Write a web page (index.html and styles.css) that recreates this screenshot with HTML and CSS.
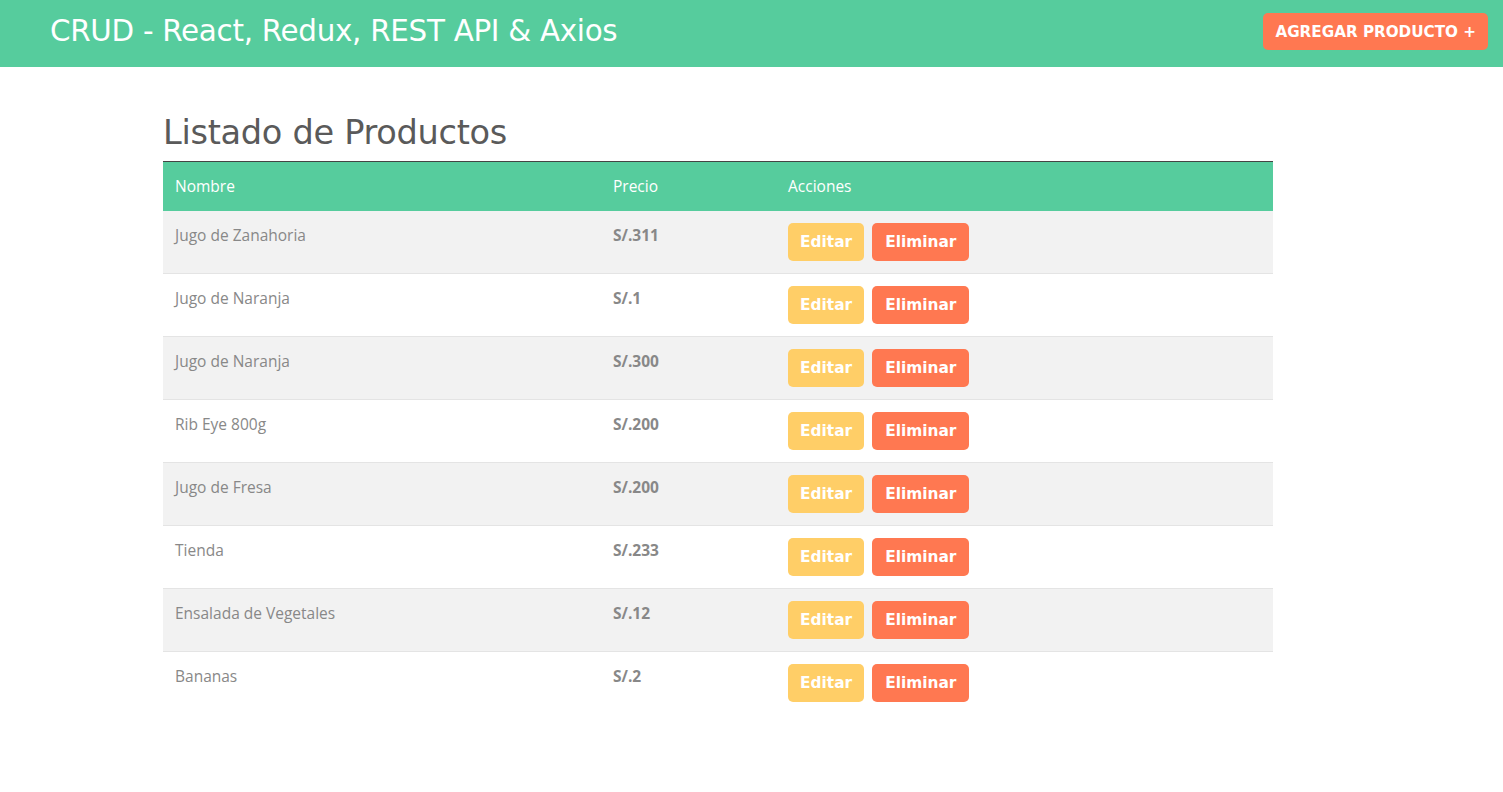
FILE: index.html
```html
<!DOCTYPE html>
<html lang="es">
<head>
<meta charset="utf-8">
<title>CRUD - React, Redux, REST API &amp; Axios</title>
<link rel="stylesheet" href="styles.css">
</head>
<body>
<nav class="navbar">
  <h1 class="brand">CRUD - React, Redux, REST API &amp; Axios</h1>
  <a class="btn btn-danger btn-add" href="#">Agregar Producto +</a>
</nav>
<main class="container">
  <h2 class="title">Listado de Productos</h2>
  <table class="table">
    <thead>
      <tr><th class="c-name">Nombre</th><th class="c-price">Precio</th><th class="c-act">Acciones</th></tr>
    </thead>
    <tbody>
      <tr><td>Jugo de Zanahoria</td><td class="price">S/.311</td><td><div class="acts"><a class="btn btn-warning" href="#">Editar</a><button class="btn btn-danger">Eliminar</button></div></td></tr>
      <tr><td>Jugo de Naranja</td><td class="price">S/.1</td><td><div class="acts"><a class="btn btn-warning" href="#">Editar</a><button class="btn btn-danger">Eliminar</button></div></td></tr>
      <tr><td>Jugo de Naranja</td><td class="price">S/.300</td><td><div class="acts"><a class="btn btn-warning" href="#">Editar</a><button class="btn btn-danger">Eliminar</button></div></td></tr>
      <tr><td>Rib Eye 800g</td><td class="price">S/.200</td><td><div class="acts"><a class="btn btn-warning" href="#">Editar</a><button class="btn btn-danger">Eliminar</button></div></td></tr>
      <tr><td>Jugo de Fresa</td><td class="price">S/.200</td><td><div class="acts"><a class="btn btn-warning" href="#">Editar</a><button class="btn btn-danger">Eliminar</button></div></td></tr>
      <tr><td>Tienda</td><td class="price">S/.233</td><td><div class="acts"><a class="btn btn-warning" href="#">Editar</a><button class="btn btn-danger">Eliminar</button></div></td></tr>
      <tr><td>Ensalada de Vegetales</td><td class="price">S/.12</td><td><div class="acts"><a class="btn btn-warning" href="#">Editar</a><button class="btn btn-danger">Eliminar</button></div></td></tr>
      <tr><td>Bananas</td><td class="price">S/.2</td><td><div class="acts"><a class="btn btn-warning" href="#">Editar</a><button class="btn btn-danger">Eliminar</button></div></td></tr>
    </tbody>
  </table>
</main>
</body>
</html>
```
FILE: styles.css
```css
* { box-sizing: border-box; }
html, body { margin: 0; padding: 0; }
body {
  font-family: "Open Sans", "Noto Sans", sans-serif;
  font-size: 15.5px;
  line-height: 24px;
  color: #888888;
  background: #ffffff;
}
.navbar {
  height: 67px;
  background: #56cc9d;
  display: flex;
  align-items: center;
  justify-content: space-between;
  padding: 0 15px 0 50px;
}
.brand {
  margin: 0;
  font-family: "DejaVu Sans", sans-serif;
  font-weight: 400;
  font-size: 29.4px;
  letter-spacing: -0.3px;
  color: #ffffff;
  line-height: 1;
  padding-bottom: 4px;
}
.btn {
  display: inline-flex;
  align-items: center;
  justify-content: center;
  height: 38px;
  padding: 0 12px;
  border: none;
  border-radius: 5px;
  font-family: "DejaVu Sans", sans-serif;
  font-weight: 700;
  font-size: 15.4px;
  color: #ffffff;
  text-decoration: none;
  cursor: pointer;
}
.btn-danger { background: #ff7851; }
.btn-warning { background: #ffce67; }
.acts .btn-danger { padding: 0 13px; }
.btn-add {
  height: 37px;
  text-transform: uppercase;
  font-size: 15.2px;
  padding: 0 12px;
  margin-top: -4px;
}
.container {
  width: 1110px;
  margin: 0 0 0 163px;
  padding-top: 48px;
}
.title {
  margin: 0 0 10px;
  font-family: "DejaVu Sans", sans-serif;
  font-weight: 400;
  font-size: 33.6px;
  letter-spacing: -0.3px;
  line-height: 36px;
  color: #5a5a5a;
}
.table {
  width: 100%;
  border-collapse: collapse;
}
.table thead th {
  background: #56cc9d;
  color: #ffffff;
  font-weight: 400;
  text-align: left;
  padding: 12px;
  border-top: 1px solid #444444;
  height: 49px;
}
.c-name { width: 438px; }
.c-price { width: 175px; }
.table tbody td {
  padding: 12px;
  vertical-align: top;
  border-top: 1px solid #e4e4e4;
}
.table tbody tr:nth-child(odd) { background: #f2f2f2; }
.table tbody tr:first-child td { border-top: none; }
.price { font-weight: 700; }
.acts { display: flex; gap: 8px; }
```
